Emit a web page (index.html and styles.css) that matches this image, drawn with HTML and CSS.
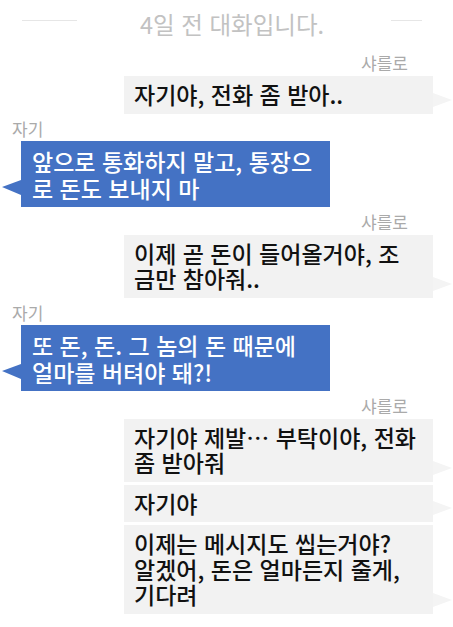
FILE: index.html
```html
<!DOCTYPE html>
<html lang="ko">
<head>
  <meta charset="UTF-8" />
  <title>대화</title>
  <link rel="stylesheet" href="styles.css">
</head>
<body>

  <div class="chat">
    <!-- 날짜 구분선 -->
    <div class="divider">
      <span class="line line-left"></span>
      <span class="divider-text">4일 전 대화입니다.</span>
      <span class="line line-right"></span>
    </div>

    <div class="msg msg-out">
      <div class="name">샤를로</div>
      <div class="bubble">자기야, 전화 좀 받아..</div>
    </div>

    <div class="msg msg-in">
      <div class="name">자기</div>
      <div class="bubble">앞으로 통화하지 말고, 통장으<br>로 돈도 보내지 마</div>
    </div>

    <div class="msg msg-out">
      <div class="name">샤를로</div>
      <div class="bubble">이제 곧 돈이 들어올거야, 조<br>금만 참아줘..</div>
    </div>

    <div class="msg msg-in">
      <div class="name">자기</div>
      <div class="bubble">또 돈, 돈. 그 놈의 돈 때문에<br>얼마를 버텨야 돼?!</div>
    </div>

    <div class="msg msg-out">
      <div class="name">샤를로</div>
      <div class="bubble">자기야 제발… 부탁이야, 전화<br>좀 받아줘</div>
      <div class="bubble">자기야</div>
      <div class="bubble">이제는 메시지도 씹는거야?<br>알겠어, 돈은 얼마든지 줄게,<br>기다려</div>
    </div>
  </div>

</body>
</html>
```

FILE: styles.css
```css
body {
  margin: 0;
  background: #fff;
  font-family: "Noto Sans CJK KR", "Noto Sans", sans-serif;
}

.chat {
  display: flex;
  flex-direction: column;
}

/* 날짜 구분선 */
.divider {
  display: flex;
  align-items: center;
  height: 48px;
  padding-left: 22px;
}
.line {
  align-self: flex-start;
  margin-top: 20px;
  height: 1px;
  background: #e6e6e6;
}
.line-left {
  width: 55px;
  margin-right: 63px;
}
.line-right {
  width: 31px;
  margin-left: 67px;
}
.divider-text {
  font-size: 23.5px;
  line-height: 48px;
  color: #c2c2c2;
  white-space: nowrap;
}

/* 메시지 묶음 */
.msg {
  display: flex;
  flex-direction: column;
  margin-top: 5px;
}
.msg:first-of-type {
  margin-top: 7px;
}
.name {
  font-size: 17px;
  line-height: 20px;
  color: #aaa;
}

.bubble {
  position: relative;
  width: 309px;
  box-sizing: border-box;
  font-size: 23px;
  font-weight: 500;
  white-space: nowrap;
}

/* 보낸 메시지 (오른쪽, 회색) */
.msg-out {
  align-items: flex-end;
}
.msg-out .name {
  margin-right: 45px;
  margin-bottom: 3px;
}
.msg-out .bubble {
  margin-right: 20px;
  padding: 6px 10px;
  line-height: 25.5px;
  background: #f2f2f2;
  color: #111;
}
.msg-out .bubble + .bubble {
  margin-top: 3px;
}
.msg-out .bubble::after {
  content: "";
  position: absolute;
  right: -19px;
  bottom: 7px;
  border-left: 19px solid #f4f4f4;
  border-top: 7px solid transparent;
  border-bottom: 7px solid transparent;
}

/* 받은 메시지 (왼쪽, 파랑) */
.msg-in {
  align-items: flex-start;
}
.msg-in .name {
  margin-left: 12px;
  margin-bottom: 2px;
}
.msg-in .bubble {
  margin-left: 21px;
  padding: 7px 11px 5px;
  line-height: 27px;
  background: #4472c4;
  color: #fff;
}
.msg-in .bubble::after {
  content: "";
  position: absolute;
  left: -19px;
  bottom: 12px;
  border-right: 19px solid #4472c4;
  border-top: 7px solid transparent;
  border-bottom: 8px solid transparent;
}
```
